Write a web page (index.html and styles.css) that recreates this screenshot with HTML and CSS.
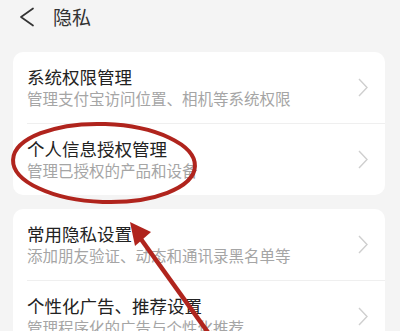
FILE: index.html
```html
<!DOCTYPE html>
<html lang="zh-CN">
<head>
<meta charset="utf-8">
<title>隐私</title>
<link rel="stylesheet" href="styles.css">
</head>
<body>
<div class="page">
  <header class="topbar">
    <svg class="back" width="16" height="20" viewBox="0 0 16 20"><polyline points="14,1.5 2,10 14,18.5" fill="none" stroke="#333" stroke-width="1.7" stroke-linecap="round" stroke-linejoin="round"/></svg>
    <span class="title">隐私</span>
  </header>

  <section class="card">
    <div class="row">
      <div class="row-body">
        <div class="texts">
          <div class="row-title">系统权限管理</div>
          <div class="row-sub">管理支付宝访问位置、相机等系统权限</div>
        </div>
        <svg class="chev" width="10" height="19" viewBox="0 0 10 19"><polyline points="1,1 9,9.5 1,18" fill="none" stroke="#cfcfcf" stroke-width="1.4"/></svg>
      </div>
    </div>
    <div class="row">
      <div class="row-body">
        <div class="texts">
          <div class="row-title">个人信息授权管理</div>
          <div class="row-sub">管理已授权的产品和设备</div>
        </div>
        <svg class="chev" width="10" height="19" viewBox="0 0 10 19"><polyline points="1,1 9,9.5 1,18" fill="none" stroke="#cfcfcf" stroke-width="1.4"/></svg>
      </div>
    </div>
  </section>

  <section class="card">
    <div class="row">
      <div class="row-body">
        <div class="texts">
          <div class="row-title">常用隐私设置</div>
          <div class="row-sub">添加朋友验证、动态和通讯录黑名单等</div>
        </div>
        <svg class="chev" width="10" height="19" viewBox="0 0 10 19"><polyline points="1,1 9,9.5 1,18" fill="none" stroke="#cfcfcf" stroke-width="1.4"/></svg>
      </div>
    </div>
    <div class="row">
      <div class="row-body">
        <div class="texts">
          <div class="row-title">个性化广告、推荐设置</div>
          <div class="row-sub">管理程序化的广告与个性化推荐</div>
        </div>
        <svg class="chev" width="10" height="19" viewBox="0 0 10 19"><polyline points="1,1 9,9.5 1,18" fill="none" stroke="#cfcfcf" stroke-width="1.4"/></svg>
      </div>
    </div>
  </section>

  <svg class="annot" width="400" height="331" viewBox="0 0 400 331">
    <ellipse cx="104" cy="163" rx="91" ry="39" transform="rotate(2 104 163)" fill="none" stroke="#b0241d" stroke-width="4"/>
    <line x1="212" y1="338" x2="138" y2="235" stroke="#b0241d" stroke-width="4.5"/>
    <polygon points="130,222 151,232 135,246" fill="#b0241d"/>
  </svg>
</div>
</body>
</html>
```

FILE: styles.css
```css
html, body {
  margin: 0;
  padding: 0;
}
body {
  background: #f4f4f4;
  font-family: "Noto Sans CJK SC", "Noto Sans", sans-serif;
  width: 400px;
  height: 331px;
  overflow: hidden;
}
.page {
  position: relative;
  width: 400px;
  height: 331px;
  overflow: hidden;
}
.topbar {
  height: 34px;
  display: flex;
  align-items: center;
  padding-left: 19px;
  gap: 18px;
  margin-bottom: 18px;
}
.back {
  display: block;
}
.title {
  font-size: 19px;
  color: #333;
  line-height: 34px;
}
.card {
  background: #fff;
  border-radius: 10px;
  margin: 0 15px 14px 13px;
  overflow: hidden;
}
.row {
  padding-left: 14px;
}
.row-body {
  display: flex;
  align-items: center;
  padding: 14px 17px 15px 0;
}
.row + .row .row-body {
  border-top: 1px solid #efefef;
  padding-top: 14px;
}
.texts {
  flex: 1;
  min-width: 0;
}
.row-title {
  font-size: 17.5px;
  line-height: 22px;
  color: #222;
  white-space: nowrap;
}
.row-sub {
  font-size: 15.5px;
  line-height: 20px;
  color: #a5a5a5;
  white-space: nowrap;
}
.chev {
  display: block;
  flex: none;
}
.annot {
  position: absolute;
  left: 0;
  top: 0;
  pointer-events: none;
}
```
